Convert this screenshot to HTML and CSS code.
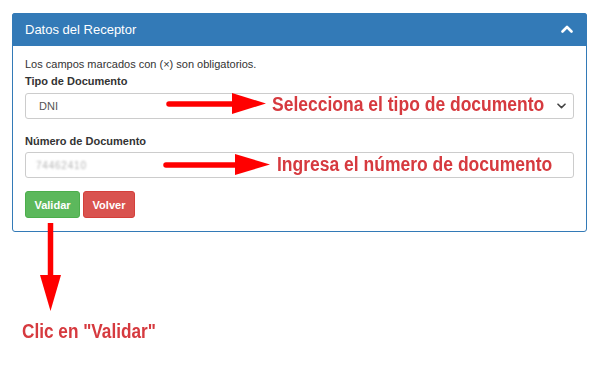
FILE: index.html
```html
<!DOCTYPE html>
<html lang="es">
<head>
<meta charset="utf-8">
<title>Datos del Receptor</title>
<link rel="stylesheet" href="styles.css">
</head>
<body>
<div class="page">
  <div class="panel">
    <div class="panel-heading">
      <span class="panel-title">Datos del Receptor</span>
      <svg class="chev-up" width="12" height="8" viewBox="0 0 12 8"><path d="M1.5 6.5 L6 2 L10.5 6.5" fill="none" stroke="#fff" stroke-width="2.6" stroke-linecap="round" stroke-linejoin="round"/></svg>
    </div>
    <div class="panel-body">
      <p class="note">Los campos marcados con (×) son obligatorios.</p>
      <label class="label label-first">Tipo de Documento</label>
      <div class="select-wrap">
        <div class="control select">DNI</div>
        <svg class="chev-down" width="9" height="6" viewBox="0 0 9 6"><path d="M1 1.2 L4.5 4.6 L8 1.2" fill="none" stroke="#444" stroke-width="1.6" stroke-linecap="round" stroke-linejoin="round"/></svg>
      </div>
      <label class="label label-second">Número de Documento</label>
      <div class="control input"><span class="masked">7 4 4 6 2 4 1 0</span></div>
      <div class="actions">
        <button class="btn btn-success">Validar</button>
        <button class="btn btn-danger">Volver</button>
      </div>
    </div>
  </div>

  <svg class="arrows" width="601" height="377" viewBox="0 0 601 377">
    <g fill="#f00" stroke="#f00">
      <line x1="169" y1="104" x2="236" y2="104" stroke-width="5.5" stroke-linecap="round"/>
      <polygon points="232,93 266,103.5 232,114" stroke="none"/>
      <line x1="166" y1="165" x2="238" y2="165" stroke-width="5.5" stroke-linecap="round"/>
      <polygon points="235,154 270,164.5 235,175" stroke="none"/>
      <line x1="50.5" y1="223" x2="50.5" y2="280" stroke-width="5.5" stroke-linecap="butt"/>
      <polygon points="40,275 50.5,311 61,275" stroke="none"/>
    </g>
  </svg>

  <span class="note-red note-1">Selecciona el tipo de documento</span>
  <span class="note-red note-2">Ingresa el número de documento</span>
  <span class="note-red note-3">Clic en "Validar"</span>
</div>
</body>
</html>
```

FILE: styles.css
```css
* { box-sizing: border-box; }
html, body { margin: 0; padding: 0; background: #fff; }
body { font-family: "Liberation Sans", Arial, sans-serif; color: #333; }

.page {
  position: relative;
  width: 601px;
  height: 377px;
  padding: 13px 14px 0 12px;
  overflow: hidden;
}

.panel {
  border: 1px solid #337ab7;
  border-radius: 3px;
  background: #fff;
}

.panel-heading {
  height: 33px;
  background: #337ab7;
  color: #fff;
  display: flex;
  align-items: center;
  justify-content: space-between;
  padding: 0 12px 1px 12px;
  margin: -1px -1px 0 -1px;
  border-radius: 3px 3px 0 0;
}
.panel-title { font-size: 13px; padding-left: 1px; }
.chev-up { margin-right: 2px; margin-top: -1px; }

.panel-body { padding: 10px 12px 13px 12px; }

.note { margin: 0; font-size: 11px; line-height: 16px; }
.label { display: block; font-size: 11px; font-weight: bold; line-height: 16px; }
.label-first { margin-top: 1px; }
.label-second { margin-top: 14px; }

.control {
  height: 26px;
  border: 1px solid #ccc;
  border-radius: 3px;
  font-size: 11px;
  display: flex;
  align-items: center;
  color: #555;
  background: #fff;
}
.select-wrap { position: relative; margin-top: 4px; }
.select { padding-left: 13px; }
.chev-down { position: absolute; right: 8px; top: 10px; }
.input { margin-top: 3px; padding-left: 10px; }
.masked { color: #b5b5b5; letter-spacing: -1px; filter: blur(0.8px); font-size: 10px; }

.actions { margin-top: 13px; display: flex; gap: 3px; }
.btn {
  height: 27px;
  border: 1px solid transparent;
  border-radius: 3px;
  color: #fff;
  font-family: "Liberation Sans", Arial, sans-serif;
  font-size: 11px;
  font-weight: bold;
  padding: 0;
}
.btn-success { background: #5cb85c; border-color: #4cae4c; width: 55px; }
.btn-danger { background: #d9534f; border-color: #d43f3a; width: 52px; }

.arrows { position: absolute; left: 0; top: 0; pointer-events: none; }

.note-red {
  position: absolute;
  font-family: "Liberation Sans", Arial, sans-serif;
  font-weight: bold;
  font-size: 20px;
  line-height: 20px;
  color: #d63a3f;
  white-space: nowrap;
  transform: scaleX(0.875);
  transform-origin: 0 0;
}
.note-1 { left: 272px; top: 94px; }
.note-2 { left: 277px; top: 154px; }
.note-3 { left: 22px; top: 321px; transform: scaleX(0.86); }
```
